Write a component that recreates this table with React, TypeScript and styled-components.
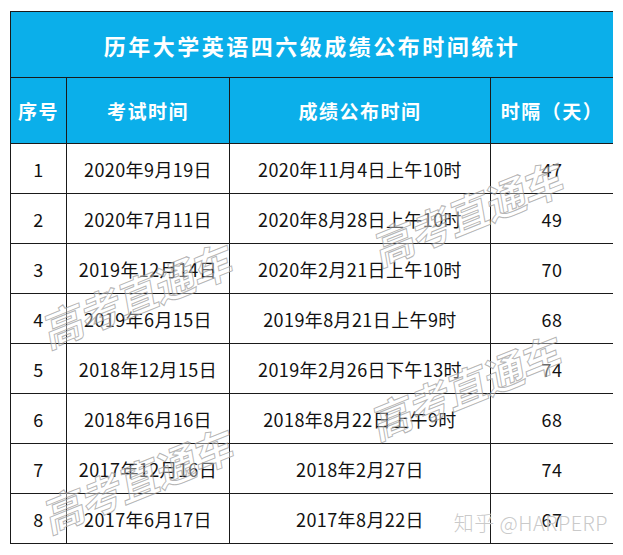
import styled, { createGlobalStyle } from 'styled-components';

const GlobalStyle = createGlobalStyle`
  html, body {
    margin: 0;
    padding: 0;
    background: #ffffff;
  }
  body {
    font-family: "Noto Sans CJK SC", "Noto Sans", sans-serif;
  }
`;

const rows = [
  ['1', '2020年9月19日', '2020年11月4日上午10时', '47'],
  ['2', '2020年7月11日', '2020年8月28日上午10时', '49'],
  ['3', '2019年12月14日', '2020年2月21日上午10时', '70'],
  ['4', '2019年6月15日', '2019年8月21日上午9时', '68'],
  ['5', '2018年12月15日', '2019年2月26日下午13时', '74'],
  ['6', '2018年6月16日', '2018年8月22日上午9时', '68'],
  ['7', '2017年12月16日', '2018年2月27日', '74'],
  ['8', '2017年6月17日', '2017年8月22日', '67'],
];

// 水印位置（中心点，相对表格）
const marks = [
  { x: 458, y: 199 },
  { x: 127, y: 281 },
  { x: 456, y: 373 },
  { x: 128, y: 466 },
];

export default function App() {
  return (
    <Page>
      <GlobalStyle />
      <Table>
        <Title>历年大学英语四六级成绩公布时间统计</Title>
        <HeadCell>序号</HeadCell>
        <HeadCell>考试时间</HeadCell>
        <HeadCell>成绩公布时间</HeadCell>
        <HeadCell>时隔（天）</HeadCell>
        {rows.map((r, i) =>
          r.map((text, j) => <Cell key={i + '-' + j}>{text}</Cell>),
        )}
        {marks.map((m, i) => (
          <Watermark key={i} style={{ left: m.x, top: m.y }}>
            高考直通车
          </Watermark>
        ))}
        <Zhihu>知乎 @HARPERP</Zhihu>
      </Table>
    </Page>
  );
}

const Page = styled.div`
  width: 623px;
  height: 555px;
  padding: 11px 0 0 10px;
  box-sizing: border-box;
`;

const Table = styled.div`
  position: relative;
  display: grid;
  grid-template-columns: 56px 163px 261px 123px;
  grid-template-rows: 66px 66px repeat(8, 50px);
  width: 603px;
  border-top: 1px solid #1a1a1a;
  border-left: 1px solid #1a1a1a;
  box-sizing: border-box;
  overflow: hidden;
`;

const Title = styled.div`
  grid-column: 1 / -1;
  display: flex;
  align-items: center;
  justify-content: center;
  background: #0bafea;
  color: #ffffff;
  font-size: 22px;
  font-weight: bold;
  letter-spacing: 2.5px;
  border-right: 1px solid #1a1a1a;
  border-bottom: 1px solid #1a1a1a;
`;

const HeadCell = styled.div`
  display: flex;
  align-items: center;
  justify-content: center;
  background: #0bafea;
  color: #ffffff;
  font-size: 19px;
  font-weight: bold;
  letter-spacing: 1.5px;
  border-right: 1px solid #1a1a1a;
  border-bottom: 1px solid #1a1a1a;
`;

const Cell = styled.div`
  display: flex;
  align-items: center;
  justify-content: center;
  color: #111111;
  font-size: 18px;
  letter-spacing: 0.4px;
  border-right: 1px solid #1a1a1a;
  border-bottom: 1px solid #1a1a1a;
  white-space: nowrap;
`;

const Watermark = styled.div`
  position: absolute;
  transform: translate(-50%, -50%) rotate(-22deg) skewX(-12deg);
  font-size: 41px;
  font-weight: bold;
  letter-spacing: -1px;
  color: rgba(255, 255, 255, 0.4);
  -webkit-text-stroke: 1px rgba(150, 150, 150, 0.7);
  white-space: nowrap;
  pointer-events: none;
`;

const Zhihu = styled.div`
  position: absolute;
  right: 5px;
  bottom: 7px;
  font-size: 20px;
  font-weight: 300;
  color: rgba(195, 195, 195, 0.9);
  text-shadow: 0 0 2px rgba(255, 255, 255, 0.9);
  letter-spacing: 0.5px;
  pointer-events: none;
`;
